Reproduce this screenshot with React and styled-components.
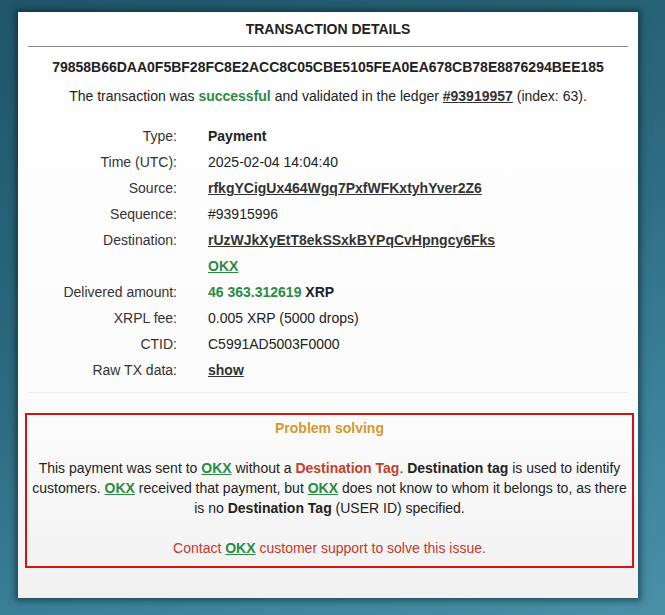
import React from 'react';
import styled, { createGlobalStyle } from 'styled-components';

const GlobalStyle = createGlobalStyle`
  html, body {
    margin: 0;
    padding: 0;
  }
  body {
    font-family: "Liberation Sans", Arial, sans-serif;
    font-size: 14px;
    color: #222;
  }
`;

const Page = styled.div`
  min-height: 615px;
  width: 665px;
  padding: 12px 0 17px 18px;
  box-sizing: border-box;
  background: linear-gradient(160deg, #1f5669 0%, #2b6a80 45%, #3c8199 75%, #4a8fa6 100%);
`;

const Card = styled.div`
  width: 620px;
  padding: 7px 10px 30px;
  box-sizing: border-box;
  background: linear-gradient(180deg, #ffffff 0%, #fbfbfb 70%, #f1f1f1 100%);
  box-shadow: 0 0 6px 3px rgba(10, 35, 45, 0.55);
`;

const Title = styled.div`
  font-weight: bold;
  line-height: 20px;
  text-align: center;
  color: #222;
  padding-bottom: 7px;
  border-bottom: 1px solid #8a8a8a;
`;

const Hash = styled.div`
  margin-top: 10px;
  font-weight: bold;
  line-height: 20px;
  text-align: center;
  color: #222;
`;

const Sentence = styled.div`
  margin-top: 9px;
  line-height: 20px;
  text-align: center;
`;

const Green = styled.span`
  color: #2b8a45;
  font-weight: bold;
`;

const Strong = styled.span`
  font-weight: bold;
  color: ${(p) => p.$color || '#222'};
`;

const Link = styled.a`
  font-weight: bold;
  color: ${(p) => (p.$green ? '#2b8a45' : '#333')};
  text-decoration: underline;
  cursor: pointer;
`;

const Details = styled.div`
  margin-top: 17px;
  display: grid;
  grid-template-columns: 149px 1fr;
  column-gap: 31px;
  grid-auto-rows: 26px;
  align-items: center;
  padding-bottom: 9px;
  border-bottom: 1px solid #ececec;
`;

const Label = styled.div`
  text-align: right;
  color: #333;
`;

const Value = styled.div`
  color: #222;
`;

const ProblemBox = styled.div`
  margin: 20px -6px 0 -3px;
  border: 2px solid #cf1414;
  padding: 3px 4px 8px;
  text-align: center;
  line-height: 20px;
`;

const ProblemTitle = styled.div`
  font-weight: bold;
  color: #d09a2c;
  margin-bottom: 20px;
`;

const ProblemText = styled.p`
  margin: 0 0 20px;
  color: #222;
`;

const Contact = styled.p`
  margin: 0;
  color: #c0392b;
`;

const rows = [
  ['Type:', <Strong key="t">Payment</Strong>],
  ['Time (UTC):', '2025-02-04 14:04:40'],
  ['Source:', <Link key="s">rfkgYCigUx464Wgq7PxfWFKxtyhYver2Z6</Link>],
  ['Sequence:', '#93915996'],
  ['Destination:', <Link key="d">rUzWJkXyEtT8ekSSxkBYPqCvHpngcy6Fks</Link>],
  ['', <Link key="o" $green>OKX</Link>],
  [
    'Delivered amount:',
    <span key="a">
      <Green>46 363.312619</Green> <Strong>XRP</Strong>
    </span>,
  ],
  ['XRPL fee:', '0.005 XRP (5000 drops)'],
  ['CTID:', 'C5991AD5003F0000'],
  ['Raw TX data:', <Link key="r">show</Link>],
];

export default function App() {
  return (
    <>
      <GlobalStyle />
      <Page>
        <Card>
          <Title>TRANSACTION DETAILS</Title>
          <Hash>79858B66DAA0F5BF28FC8E2ACC8C05CBE5105FEA0EA678CB78E8876294BEE185</Hash>
          <Sentence>
            The transaction was <Green>successful</Green> and validated in the ledger{' '}
            <Link>#93919957</Link> (index: 63).
          </Sentence>
          <Details>
            {rows.map(([label, value], i) => (
              <React.Fragment key={i}>
                <Label>{label}</Label>
                <Value>{value}</Value>
              </React.Fragment>
            ))}
          </Details>
          <ProblemBox>
            <ProblemTitle>Problem solving</ProblemTitle>
            <ProblemText>
              This payment was sent to <Link $green>OKX</Link> without a{' '}
              <Strong $color="#c2412d">Destination Tag</Strong>. <Strong>Destination tag</Strong> is used
              to identify customers. <Link $green>OKX</Link> received that payment, but{' '}
              <Link $green>OKX</Link> does not know to whom it belongs to, as there is no{' '}
              <Strong>Destination Tag</Strong> (USER ID) specified.
            </ProblemText>
            <Contact>
              Contact <Link $green>OKX</Link> customer support to solve this issue.
            </Contact>
          </ProblemBox>
        </Card>
      </Page>
    </>
  );
}
